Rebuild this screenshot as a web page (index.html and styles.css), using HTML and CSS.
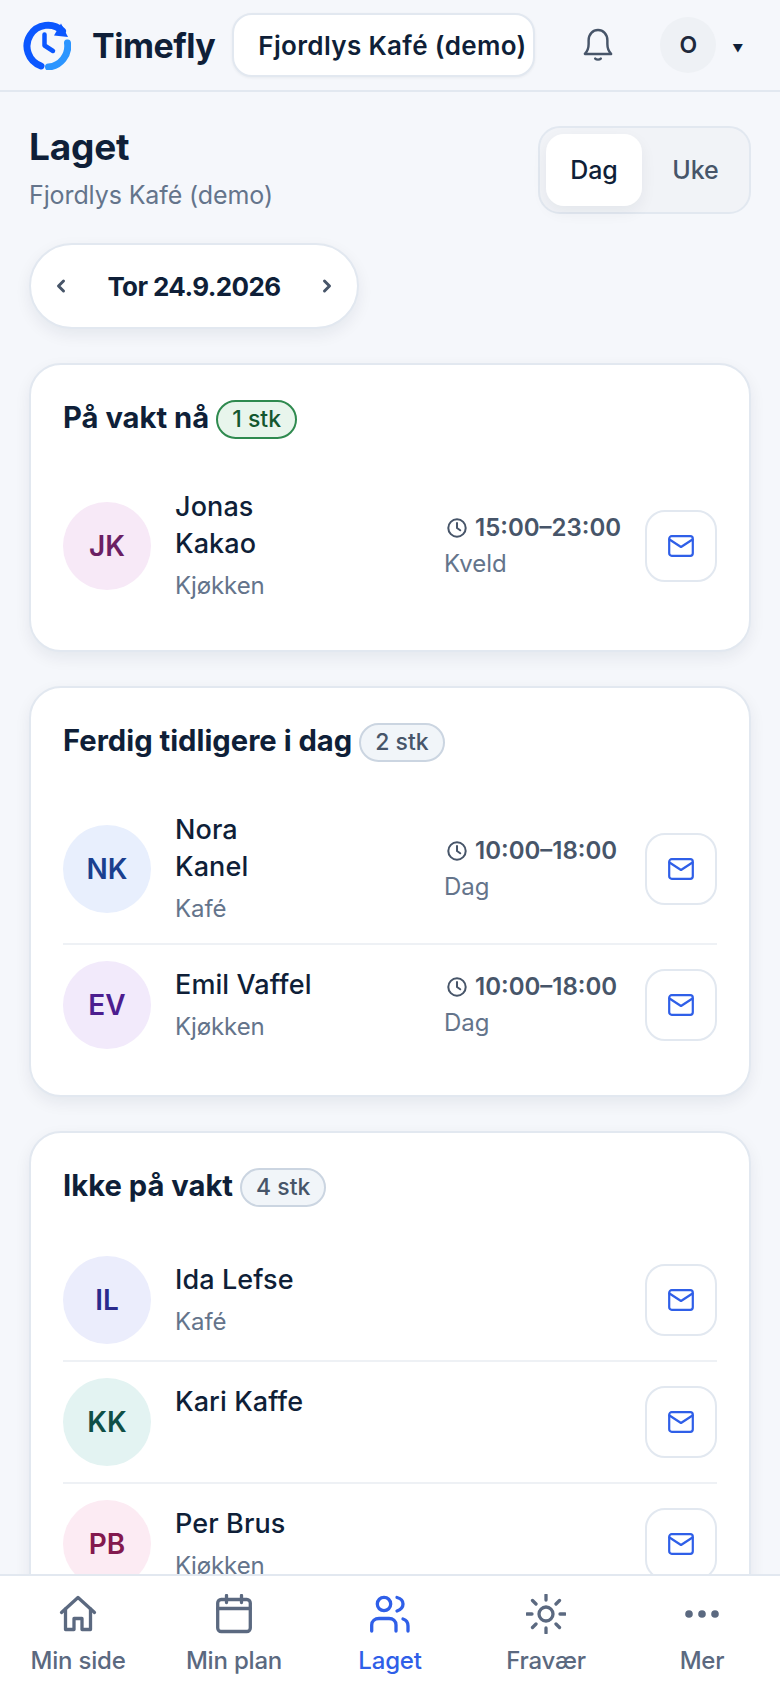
FILE: index.html
```html
<!DOCTYPE html>
<html lang="no">
<head>
  <meta charset="UTF-8" />
  <meta name="viewport" content="width=device-width, initial-scale=1.0"/>
  <title>Laget - Timefly</title>
  <link rel="stylesheet" href="styles.css">
</head>
<body>
  <header class="topbar">
    <svg class="logo" viewBox="0 0 50 50" fill="none">
      <path d="M41.500 11A21 21 0 1 0 20 46" stroke="#0b57ff" stroke-width="7" stroke-linecap="round"/>
      <path d="M40 3.500L47 17 33 15.500z" fill="#0b57ff"/>
      <path d="M27.500 47A21 21 0 0 0 46.500 23" stroke="#2b95ff" stroke-width="7" stroke-linecap="round"/>
      <path d="M23.500 14.500v11l8.500 5.500" stroke="#0b57ff" stroke-width="4.500" stroke-linecap="round" stroke-linejoin="round"/>
    </svg>
    <span class="brand">Timefly</span>
    <div class="place-select"><span>Fjordlys Kafé (demo)</span></div>
    <svg class="bell" viewBox="0 0 32 36" fill="none" stroke="#475569" stroke-width="2.600" stroke-linecap="round" stroke-linejoin="round">
      <path d="M2 27.500h28c-2.500-2.500-4-5-4-10.500V13C26 6.500 21.500 2 16 2S6 6.500 6 13v4c0 5.500-1.500 8-4 10.500z"/>
      <path d="M13 32.500c1.500 1.500 4.500 1.500 6 0"/>
    </svg>
    <div class="user-chip">O</div>
    <span class="caret">▼</span>
  </header>

  <main class="page">
    <div class="page-head">
      <div>
        <h1>Laget</h1>
        <p class="page-sub">Fjordlys Kafé (demo)</p>
      </div>
      <div class="segment">
        <button class="seg-btn active">Dag</button>
        <button class="seg-btn">Uke</button>
      </div>
    </div>

    <div class="date-pill">
      <svg class="chev" viewBox="0 0 12 16" fill="none"><path d="M8.500 3L3.500 8l5 5"/></svg>
      <span>Tor 24.9.2026</span>
      <svg class="chev" viewBox="0 0 12 16" fill="none"><path d="M3.500 3l5 5-5 5"/></svg>
    </div>

    <section class="card">
      <div class="card-title"><h2>På vakt nå</h2><span class="badge green">1 stk</span></div>
      <div class="person">
        <div class="avatar a-pink">JK</div>
        <div class="info">
          <div class="name">Jonas<br>Kakao</div>
          <div class="role">Kjøkken</div>
        </div>
        <div class="shift">
          <div class="shift-time">
            <svg viewBox="0 0 24 24" fill="none"><circle cx="12" cy="12" r="9.500"/><path d="M12 6.500V12l3.500 2.500"/></svg>
            15:00–23:00
          </div>
          <div class="shift-name">Kveld</div>
        </div>
        <button class="mail"><svg viewBox="0 0 26 22" fill="none"><rect x="1.200" y="1.200" width="23.600" height="19.600" rx="2.500"/><path d="M1.500 4.500L13 12l11.500-7.500"/></svg></button>
      </div>
    </section>

    <section class="card">
      <div class="card-title"><h2>Ferdig tidligere i dag</h2><span class="badge">2 stk</span></div>
      <div class="person">
        <div class="avatar a-blue">NK</div>
        <div class="info">
          <div class="name">Nora<br>Kanel</div>
          <div class="role">Kafé</div>
        </div>
        <div class="shift">
          <div class="shift-time">
            <svg viewBox="0 0 24 24" fill="none"><circle cx="12" cy="12" r="9.500"/><path d="M12 6.500V12l3.500 2.500"/></svg>
            10:00–18:00
          </div>
          <div class="shift-name">Dag</div>
        </div>
        <button class="mail"><svg viewBox="0 0 26 22" fill="none"><rect x="1.200" y="1.200" width="23.600" height="19.600" rx="2.500"/><path d="M1.500 4.500L13 12l11.500-7.500"/></svg></button>
      </div>
      <div class="person">
        <div class="avatar a-purple">EV</div>
        <div class="info">
          <div class="name">Emil Vaffel</div>
          <div class="role">Kjøkken</div>
        </div>
        <div class="shift">
          <div class="shift-time">
            <svg viewBox="0 0 24 24" fill="none"><circle cx="12" cy="12" r="9.500"/><path d="M12 6.500V12l3.500 2.500"/></svg>
            10:00–18:00
          </div>
          <div class="shift-name">Dag</div>
        </div>
        <button class="mail"><svg viewBox="0 0 26 22" fill="none"><rect x="1.200" y="1.200" width="23.600" height="19.600" rx="2.500"/><path d="M1.500 4.500L13 12l11.500-7.500"/></svg></button>
      </div>
    </section>

    <section class="card">
      <div class="card-title"><h2>Ikke på vakt</h2><span class="badge">4 stk</span></div>
      <div class="person">
        <div class="avatar a-indigo">IL</div>
        <div class="info">
          <div class="name">Ida Lefse</div>
          <div class="role">Kafé</div>
        </div>
        <button class="mail"><svg viewBox="0 0 26 22" fill="none"><rect x="1.200" y="1.200" width="23.600" height="19.600" rx="2.500"/><path d="M1.500 4.500L13 12l11.500-7.500"/></svg></button>
      </div>
      <div class="person">
        <div class="avatar a-teal">KK</div>
        <div class="info">
          <div class="name">Kari Kaffe</div>
          <div class="role">&nbsp;</div>
        </div>
        <button class="mail"><svg viewBox="0 0 26 22" fill="none"><rect x="1.200" y="1.200" width="23.600" height="19.600" rx="2.500"/><path d="M1.500 4.500L13 12l11.500-7.500"/></svg></button>
      </div>
      <div class="person">
        <div class="avatar a-rose">PB</div>
        <div class="info">
          <div class="name">Per Brus</div>
          <div class="role">Kjøkken</div>
        </div>
        <button class="mail"><svg viewBox="0 0 26 22" fill="none"><rect x="1.200" y="1.200" width="23.600" height="19.600" rx="2.500"/><path d="M1.500 4.500L13 12l11.500-7.500"/></svg></button>
      </div>
    </section>
  </main>

  <nav class="tabs">
    <a class="tab">
      <svg viewBox="0 0 40 40" fill="none"><path d="M3.500 18.500L20 3.500l16.500 15"/><path d="M7.500 15v20.500H16V24.500h8v11h8.500V15"/></svg>
      Min side
    </a>
    <a class="tab">
      <svg viewBox="0 0 40 40" fill="none"><rect x="3.700" y="5.500" width="32.600" height="32" rx="3.500"/><path d="M3.700 14.500h32.600M12.500 1.500v7M27.500 1.500v7"/></svg>
      Min plan
    </a>
    <a class="tab on">
      <svg viewBox="0 0 40 40" fill="none"><circle cx="14" cy="10" r="6.700"/><path d="M1.700 37v-6c0-4 3.300-6.500 7.300-6.500h10c4 0 7 2.500 7 6.500v6"/><path d="M27 3.500c4 1 6 3.500 6 6.500s-2 5.500-6 7"/><path d="M33 25c3.500 1 5 4 5 7v5"/></svg>
      Laget
    </a>
    <a class="tab">
      <svg viewBox="0 0 40 40" fill="none"><circle cx="20" cy="20" r="7"/><path d="M20 1v5M20 34v5M1 20h5M34 20h5M6.500 6.500L10 10M30 30l3.500 3.500M6.500 33.500L10 30M30 10l3.500-3.500"/></svg>
      Fravær
    </a>
    <a class="tab">
      <svg viewBox="0 0 40 40"><circle class="dot" cx="7" cy="20" r="3.800"/><circle class="dot" cx="20" cy="20" r="3.800"/><circle class="dot" cx="33" cy="20" r="3.800"/></svg>
      Mer
    </a>
  </nav>
</body>
</html>
```

FILE: styles.css
```css
* {
  box-sizing: border-box;
}
html, body {
  height: 100%;
}
body {
  margin: 0;
  display: flex;
  flex-direction: column;
  overflow: hidden;
  background: #f5f7fb;
  color: #0f1f38;
  font-family: Inter, "Noto Sans", sans-serif;
}
h1, h2, p {
  margin: 0;
}
button {
  font-family: inherit;
  cursor: pointer;
}

/* top bar */
.topbar {
  flex: none;
  height: 92px;
  display: flex;
  align-items: center;
  padding: 0 0 0 21px;
  border-bottom: 2px solid #e2e8f0;
}
.logo {
  width: 50px;
  height: 50px;
  flex: none;
}
.brand {
  margin-left: 21px;
  font-size: 34px;
  font-weight: 700;
  letter-spacing: -0.5px;
}
.place-select {
  width: 303px;
  height: 64px;
  margin-left: 17px;
  padding-left: 24px;
  display: flex;
  align-items: center;
  overflow: hidden;
  white-space: nowrap;
  background: #fff;
  border: 2px solid #e2e8f0;
  border-radius: 20px;
  box-shadow: 0 1px 3px rgba(15, 31, 56, 0.06);
  font-size: 26px;
  font-weight: 600;
  letter-spacing: 0.35px;
}
.bell {
  width: 30px;
  height: 34px;
  margin-left: 48px;
  flex: none;
}
.user-chip {
  width: 56px;
  height: 56px;
  margin-left: 47px;
  flex: none;
  display: flex;
  align-items: center;
  justify-content: center;
  border-radius: 50%;
  background: #eef1f5;
  color: #1e293b;
  font-size: 23px;
  font-weight: 600;
}
.caret {
  margin-left: 16px;
  padding-top: 6px;
  font-size: 11px;
}

/* page */
.page {
  flex: 1;
  min-height: 0;
  overflow: hidden;
  padding: 32px 29px 0;
}
.page-head {
  display: flex;
  justify-content: space-between;
  align-items: flex-start;
}
h1 {
  margin-top: -1px;
  font-size: 37px;
  line-height: 48px;
  font-weight: 700;
  letter-spacing: -0.2px;
}
.page-sub {
  margin-top: 6px;
  font-size: 25px;
  line-height: 36px;
  color: #64748b;
  letter-spacing: -0.1px;
}
.segment {
  width: 213px;
  height: 88px;
  margin-top: 2px;
  padding: 6px;
  display: flex;
  gap: 6px;
  background: #f1f3f7;
  border: 2px solid #e2e8f0;
  border-radius: 22px;
}
.seg-btn {
  flex: 1;
  border: 0;
  border-radius: 18px;
  background: transparent;
  color: #475569;
  font-size: 25px;
  font-weight: 500;
}
.seg-btn.active {
  flex: none;
  width: 96px;
  background: #fff;
  color: #0f1f38;
  box-shadow: 0 6px 16px rgba(15, 31, 56, 0.06);
}
.date-pill {
  width: 330px;
  height: 86px;
  margin-top: 29px;
  padding: 0 24px;
  display: flex;
  align-items: center;
  justify-content: space-between;
  background: #fff;
  border: 2px solid #e2e8f0;
  border-radius: 43px;
  box-shadow: 0 6px 16px rgba(15, 31, 56, 0.07);
  font-size: 26px;
  font-weight: 700;
  letter-spacing: -0.6px;
}
.chev {
  width: 12px;
  height: 16px;
}
.chev path {
  stroke: #475569;
  stroke-width: 3;
  stroke-linecap: round;
  stroke-linejoin: round;
}

/* cards */
.card {
  margin-top: 34px;
  padding: 32px 32px 30px;
  background: #fff;
  border: 2px solid #e2e8f0;
  border-radius: 32px;
  box-shadow: 0 6px 16px rgba(15, 31, 56, 0.07);
}
.card-title {
  height: 40px;
  margin-bottom: 35px;
  display: flex;
  align-items: center;
  gap: 7px;
}
h2 {
  font-size: 29.200px;
  font-weight: 700;
}
.badge {
  height: 39px;
  margin-top: 4px;
  padding: 0 14px;
  display: flex;
  align-items: center;
  background: #f1f5f9;
  border: 2px solid #cbd5e1;
  border-radius: 20px;
  color: #475569;
  font-size: 23px;
  font-weight: 500;
}
.badge.green {
  background: #e8f5ec;
  border-color: #2f8a4f;
  color: #14572f;
}
.person {
  display: flex;
  align-items: center;
  padding: 16px 0;
  border-top: 2px solid #eef1f5;
}
.card-title + .person {
  border-top: 0;
}
.avatar {
  width: 88px;
  height: 88px;
  flex: none;
  display: flex;
  align-items: center;
  justify-content: center;
  border-radius: 50%;
  font-size: 28px;
  font-weight: 600;
}
.a-pink { background: #f7e9f7; color: #6b1f64; }
.a-blue { background: #e8effd; color: #1a3f8f; }
.a-purple { background: #f2eafb; color: #4c1d8f; }
.a-indigo { background: #ebedfc; color: #2a2a8c; }
.a-teal { background: #e3f3f2; color: #0f4f46; }
.a-rose { background: #fcebf3; color: #83194e; }
.info {
  flex: 1;
  min-width: 0;
  margin-left: 24px;
}
.name {
  font-size: 27px;
  line-height: 37px;
  font-weight: 500;
  letter-spacing: 0.1px;
}
.role {
  margin-top: 6px;
  font-size: 24px;
  line-height: 36px;
  color: #64748b;
  letter-spacing: -0.1px;
}
.shift {
  width: 177px;
  margin-right: 24px;
  flex: none;
}
.shift-time {
  display: flex;
  align-items: center;
  gap: 7px;
  padding-left: 2px;
  white-space: nowrap;
  font-size: 24px;
  line-height: 36px;
  font-weight: 600;
  color: #475569;
}
.shift-time svg {
  width: 22px;
  height: 22px;
  flex: none;
  stroke: #475569;
  stroke-width: 2.200;
  stroke-linecap: round;
  stroke-linejoin: round;
}
.shift-name {
  font-size: 24px;
  line-height: 36px;
  color: #64748b;
}
.mail {
  width: 72px;
  height: 72px;
  flex: none;
  padding: 0;
  display: flex;
  align-items: center;
  justify-content: center;
  background: #fff;
  border: 2px solid #e2e8f0;
  border-radius: 20px;
}
.mail svg {
  width: 26px;
  height: 22px;
  stroke: #2f5fe8;
  stroke-width: 2.200;
  stroke-linejoin: round;
  stroke-linecap: round;
}

/* bottom nav */
.tabs {
  flex: none;
  height: 114px;
  display: grid;
  grid-template-columns: repeat(5, 1fr);
  background: #fff;
  border-top: 2px solid #e2e8f0;
}
.tab {
  padding-top: 18px;
  display: flex;
  flex-direction: column;
  align-items: center;
  gap: 9px;
  color: #5b6980;
  font-size: 24px;
  line-height: 36px;
  font-weight: 500;
  letter-spacing: -0.2px;
}
.tab svg {
  width: 40px;
  height: 40px;
  stroke: currentColor;
  stroke-width: 3.300;
  stroke-linecap: round;
  stroke-linejoin: round;
}
.tab.on {
  color: #2f5fe8;
}
.tab .dot {
  fill: currentColor;
  stroke: none;
}
```
